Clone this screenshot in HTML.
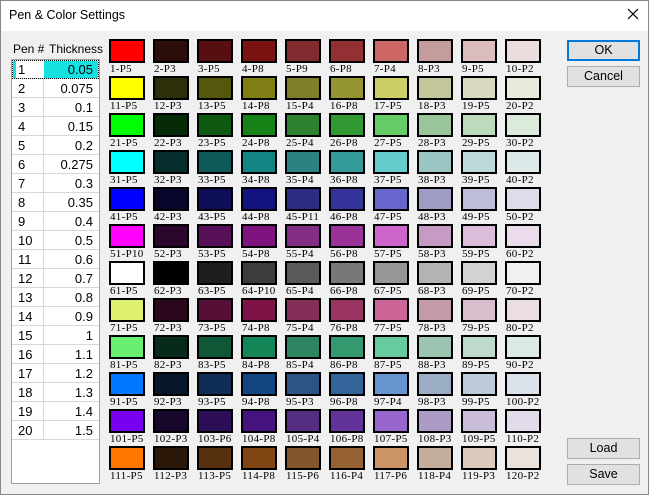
<!DOCTYPE html>
<html><head><meta charset="utf-8"><style>
*{margin:0;padding:0;box-sizing:border-box}
body{width:649px;height:495px;overflow:hidden;background:#fff;font-family:"Liberation Sans",sans-serif}
#win{position:absolute;left:0;top:0;width:649px;height:495px;background:#f0f0f0;border:1px solid #888}
#title{position:absolute;left:0;top:0;width:647px;height:30px;background:#fff}
#title span{position:absolute;left:8px;top:7px;font-size:12.5px;color:#000}
#x{position:absolute;left:625px;top:6px;width:14px;height:14px}
.hdr{position:absolute;top:41px;font-size:12px;color:#000}
#tbl{position:absolute;left:10px;top:58px;width:89px;height:425px;background:#fff;border:1px solid #a0a0a0}
.r{position:absolute;left:0;width:87px;height:19px;border-bottom:1px solid #d8d8d8;font-size:13px}
.r .a{position:absolute;left:6px;top:2px}
.r .b{position:absolute;right:6px;top:2px}
.r .v{position:absolute;left:31px;top:0;width:1px;height:19px;background:#d8d8d8}
.s{position:absolute;width:36px;height:24px;border:2px solid #000}
.l{position:absolute;font-family:"Liberation Serif",serif;font-size:11px;color:#000;letter-spacing:0.3px;white-space:nowrap;margin-top:1px}
.btn{position:absolute;left:566px;width:73px;height:21px;background:#e1e1e1;border:1px solid #adadad;font-size:12.5px;text-align:center;line-height:19px}
</style></head><body><div id="win">
<div id="title"><span>Pen &amp; Color Settings</span>
<svg id="x" viewBox="0 0 14 14"><path d="M2 2L12 12M12 2L2 12" stroke="#000" stroke-width="1.2"/></svg></div>
<div class="hdr" style="left:12px">Pen #</div><div class="hdr" style="left:48px">Thickness</div>
<div id="tbl">
<div class="r" style="top:0"><div style="position:absolute;left:1px;top:1px;width:3px;height:17px;background:#17e0e0"></div><div style="position:absolute;left:32px;top:1px;width:54px;height:17px;background:#17e0e0"></div><div style="position:absolute;left:0;top:0;width:87px;height:19px;border:1px dotted #000"></div><span class="a">1</span><span class="b">0.05</span></div>
<div class="r" style="top:19px"><span class="a">2</span><i class="v"></i><span class="b">0.075</span></div>
<div class="r" style="top:38px"><span class="a">3</span><i class="v"></i><span class="b">0.1</span></div>
<div class="r" style="top:57px"><span class="a">4</span><i class="v"></i><span class="b">0.15</span></div>
<div class="r" style="top:76px"><span class="a">5</span><i class="v"></i><span class="b">0.2</span></div>
<div class="r" style="top:95px"><span class="a">6</span><i class="v"></i><span class="b">0.275</span></div>
<div class="r" style="top:114px"><span class="a">7</span><i class="v"></i><span class="b">0.3</span></div>
<div class="r" style="top:133px"><span class="a">8</span><i class="v"></i><span class="b">0.35</span></div>
<div class="r" style="top:152px"><span class="a">9</span><i class="v"></i><span class="b">0.4</span></div>
<div class="r" style="top:171px"><span class="a">10</span><i class="v"></i><span class="b">0.5</span></div>
<div class="r" style="top:190px"><span class="a">11</span><i class="v"></i><span class="b">0.6</span></div>
<div class="r" style="top:209px"><span class="a">12</span><i class="v"></i><span class="b">0.7</span></div>
<div class="r" style="top:228px"><span class="a">13</span><i class="v"></i><span class="b">0.8</span></div>
<div class="r" style="top:247px"><span class="a">14</span><i class="v"></i><span class="b">0.9</span></div>
<div class="r" style="top:266px"><span class="a">15</span><i class="v"></i><span class="b">1</span></div>
<div class="r" style="top:285px"><span class="a">16</span><i class="v"></i><span class="b">1.1</span></div>
<div class="r" style="top:304px"><span class="a">17</span><i class="v"></i><span class="b">1.2</span></div>
<div class="r" style="top:323px"><span class="a">18</span><i class="v"></i><span class="b">1.3</span></div>
<div class="r" style="top:342px"><span class="a">19</span><i class="v"></i><span class="b">1.4</span></div>
<div class="r" style="top:361px"><span class="a">20</span><i class="v"></i><span class="b">1.5</span></div>
</div>

<div class="s" style="left:108px;top:38px;background:#ff0000"></div><div class="l" style="left:109px;top:61px">1-P5</div>
<div class="s" style="left:152px;top:38px;background:#2b0d09"></div><div class="l" style="left:153px;top:61px">2-P3</div>
<div class="s" style="left:196px;top:38px;background:#570f12"></div><div class="l" style="left:197px;top:61px">3-P5</div>
<div class="s" style="left:240px;top:38px;background:#7b1313"></div><div class="l" style="left:241px;top:61px">4-P8</div>
<div class="s" style="left:284px;top:38px;background:#812b2e"></div><div class="l" style="left:285px;top:61px">5-P9</div>
<div class="s" style="left:328px;top:38px;background:#923034"></div><div class="l" style="left:329px;top:61px">6-P8</div>
<div class="s" style="left:372px;top:38px;background:#cd6766"></div><div class="l" style="left:373px;top:61px">7-P4</div>
<div class="s" style="left:416px;top:38px;background:#c49c9c"></div><div class="l" style="left:417px;top:61px">8-P3</div>
<div class="s" style="left:460px;top:38px;background:#dbbdbe"></div><div class="l" style="left:461px;top:61px">9-P5</div>
<div class="s" style="left:504px;top:38px;background:#ebdddd"></div><div class="l" style="left:505px;top:61px">10-P2</div>

<div class="s" style="left:108px;top:75px;background:#ffff00"></div><div class="l" style="left:109px;top:98px">11-P5</div>
<div class="s" style="left:152px;top:75px;background:#2e2e0a"></div><div class="l" style="left:153px;top:98px">12-P3</div>
<div class="s" style="left:196px;top:75px;background:#55570f"></div><div class="l" style="left:197px;top:98px">13-P5</div>
<div class="s" style="left:240px;top:75px;background:#7f7f16"></div><div class="l" style="left:241px;top:98px">14-P8</div>
<div class="s" style="left:284px;top:75px;background:#7f7f2b"></div><div class="l" style="left:285px;top:98px">15-P4</div>
<div class="s" style="left:328px;top:75px;background:#959631"></div><div class="l" style="left:329px;top:98px">16-P8</div>
<div class="s" style="left:372px;top:75px;background:#cece66"></div><div class="l" style="left:373px;top:98px">17-P5</div>
<div class="s" style="left:416px;top:75px;background:#c4c59b"></div><div class="l" style="left:417px;top:98px">18-P3</div>
<div class="s" style="left:460px;top:75px;background:#d8d9be"></div><div class="l" style="left:461px;top:98px">19-P5</div>
<div class="s" style="left:504px;top:75px;background:#e8eadc"></div><div class="l" style="left:505px;top:98px">20-P2</div>

<div class="s" style="left:108px;top:112px;background:#00ff00"></div><div class="l" style="left:109px;top:135px">21-P5</div>
<div class="s" style="left:152px;top:112px;background:#072b07"></div><div class="l" style="left:153px;top:135px">22-P3</div>
<div class="s" style="left:196px;top:112px;background:#0e5811"></div><div class="l" style="left:197px;top:135px">23-P5</div>
<div class="s" style="left:240px;top:112px;background:#178218"></div><div class="l" style="left:241px;top:135px">24-P8</div>
<div class="s" style="left:284px;top:112px;background:#2c822e"></div><div class="l" style="left:285px;top:135px">25-P4</div>
<div class="s" style="left:328px;top:112px;background:#339933"></div><div class="l" style="left:329px;top:135px">26-P8</div>
<div class="s" style="left:372px;top:112px;background:#66cc66"></div><div class="l" style="left:373px;top:135px">27-P5</div>
<div class="s" style="left:416px;top:112px;background:#9bc59b"></div><div class="l" style="left:417px;top:135px">28-P3</div>
<div class="s" style="left:460px;top:112px;background:#bcdabc"></div><div class="l" style="left:461px;top:135px">29-P5</div>
<div class="s" style="left:504px;top:112px;background:#dceadc"></div><div class="l" style="left:505px;top:135px">30-P2</div>

<div class="s" style="left:108px;top:149px;background:#00ffff"></div><div class="l" style="left:109px;top:172px">31-P5</div>
<div class="s" style="left:152px;top:149px;background:#062d2d"></div><div class="l" style="left:153px;top:172px">32-P3</div>
<div class="s" style="left:196px;top:149px;background:#0e5a5a"></div><div class="l" style="left:197px;top:172px">33-P5</div>
<div class="s" style="left:240px;top:149px;background:#148383"></div><div class="l" style="left:241px;top:172px">34-P8</div>
<div class="s" style="left:284px;top:149px;background:#2c8282"></div><div class="l" style="left:285px;top:172px">35-P4</div>
<div class="s" style="left:328px;top:149px;background:#339999"></div><div class="l" style="left:329px;top:172px">36-P8</div>
<div class="s" style="left:372px;top:149px;background:#66cccc"></div><div class="l" style="left:373px;top:172px">37-P5</div>
<div class="s" style="left:416px;top:149px;background:#9bc5c5"></div><div class="l" style="left:417px;top:172px">38-P3</div>
<div class="s" style="left:460px;top:149px;background:#bcdada"></div><div class="l" style="left:461px;top:172px">39-P5</div>
<div class="s" style="left:504px;top:149px;background:#dceaea"></div><div class="l" style="left:505px;top:172px">40-P2</div>

<div class="s" style="left:108px;top:186px;background:#0000ff"></div><div class="l" style="left:109px;top:209px">41-P5</div>
<div class="s" style="left:152px;top:186px;background:#07072b"></div><div class="l" style="left:153px;top:209px">42-P3</div>
<div class="s" style="left:196px;top:186px;background:#0f0f57"></div><div class="l" style="left:197px;top:209px">43-P5</div>
<div class="s" style="left:240px;top:186px;background:#13137f"></div><div class="l" style="left:241px;top:209px">44-P8</div>
<div class="s" style="left:284px;top:186px;background:#2d2d82"></div><div class="l" style="left:285px;top:209px">45-P11</div>
<div class="s" style="left:328px;top:186px;background:#333399"></div><div class="l" style="left:329px;top:209px">46-P8</div>
<div class="s" style="left:372px;top:186px;background:#6666cc"></div><div class="l" style="left:373px;top:209px">47-P5</div>
<div class="s" style="left:416px;top:186px;background:#9c9cc5"></div><div class="l" style="left:417px;top:209px">48-P3</div>
<div class="s" style="left:460px;top:186px;background:#bdbdda"></div><div class="l" style="left:461px;top:209px">49-P5</div>
<div class="s" style="left:504px;top:186px;background:#dcdcea"></div><div class="l" style="left:505px;top:209px">50-P2</div>

<div class="s" style="left:108px;top:223px;background:#ff00ff"></div><div class="l" style="left:109px;top:246px">51-P10</div>
<div class="s" style="left:152px;top:223px;background:#2b072b"></div><div class="l" style="left:153px;top:246px">52-P3</div>
<div class="s" style="left:196px;top:223px;background:#570f57"></div><div class="l" style="left:197px;top:246px">53-P5</div>
<div class="s" style="left:240px;top:223px;background:#7f137f"></div><div class="l" style="left:241px;top:246px">54-P8</div>
<div class="s" style="left:284px;top:223px;background:#832d83"></div><div class="l" style="left:285px;top:246px">55-P4</div>
<div class="s" style="left:328px;top:223px;background:#993399"></div><div class="l" style="left:329px;top:246px">56-P8</div>
<div class="s" style="left:372px;top:223px;background:#cc66cc"></div><div class="l" style="left:373px;top:246px">57-P5</div>
<div class="s" style="left:416px;top:223px;background:#c59bc5"></div><div class="l" style="left:417px;top:246px">58-P3</div>
<div class="s" style="left:460px;top:223px;background:#dabdda"></div><div class="l" style="left:461px;top:246px">59-P5</div>
<div class="s" style="left:504px;top:223px;background:#eadcea"></div><div class="l" style="left:505px;top:246px">60-P2</div>

<div class="s" style="left:108px;top:260px;background:#ffffff"></div><div class="l" style="left:109px;top:283px">61-P5</div>
<div class="s" style="left:152px;top:260px;background:#000000"></div><div class="l" style="left:153px;top:283px">62-P3</div>
<div class="s" style="left:196px;top:260px;background:#1e1e1e"></div><div class="l" style="left:197px;top:283px">63-P5</div>
<div class="s" style="left:240px;top:260px;background:#3c3c3c"></div><div class="l" style="left:241px;top:283px">64-P10</div>
<div class="s" style="left:284px;top:260px;background:#5a5a5a"></div><div class="l" style="left:285px;top:283px">65-P4</div>
<div class="s" style="left:328px;top:260px;background:#787878"></div><div class="l" style="left:329px;top:283px">66-P8</div>
<div class="s" style="left:372px;top:260px;background:#969696"></div><div class="l" style="left:373px;top:283px">67-P5</div>
<div class="s" style="left:416px;top:260px;background:#b4b4b4"></div><div class="l" style="left:417px;top:283px">68-P3</div>
<div class="s" style="left:460px;top:260px;background:#d2d2d2"></div><div class="l" style="left:461px;top:283px">69-P5</div>
<div class="s" style="left:504px;top:260px;background:#f0f0f0"></div><div class="l" style="left:505px;top:283px">70-P2</div>

<div class="s" style="left:108px;top:297px;background:#dfef70"></div><div class="l" style="left:109px;top:320px">71-P5</div>
<div class="s" style="left:152px;top:297px;background:#2b071b"></div><div class="l" style="left:153px;top:320px">72-P3</div>
<div class="s" style="left:196px;top:297px;background:#570f37"></div><div class="l" style="left:197px;top:320px">73-P5</div>
<div class="s" style="left:240px;top:297px;background:#7f1347"></div><div class="l" style="left:241px;top:320px">74-P8</div>
<div class="s" style="left:284px;top:297px;background:#832d57"></div><div class="l" style="left:285px;top:320px">75-P4</div>
<div class="s" style="left:328px;top:297px;background:#99335f"></div><div class="l" style="left:329px;top:320px">76-P8</div>
<div class="s" style="left:372px;top:297px;background:#cc6699"></div><div class="l" style="left:373px;top:320px">77-P5</div>
<div class="s" style="left:416px;top:297px;background:#c59bac"></div><div class="l" style="left:417px;top:320px">78-P3</div>
<div class="s" style="left:460px;top:297px;background:#dabdcc"></div><div class="l" style="left:461px;top:320px">79-P5</div>
<div class="s" style="left:504px;top:297px;background:#eadde3"></div><div class="l" style="left:505px;top:320px">80-P2</div>

<div class="s" style="left:108px;top:334px;background:#6bef70"></div><div class="l" style="left:109px;top:357px">81-P5</div>
<div class="s" style="left:152px;top:334px;background:#072b1b"></div><div class="l" style="left:153px;top:357px">82-P3</div>
<div class="s" style="left:196px;top:334px;background:#0f5837"></div><div class="l" style="left:197px;top:357px">83-P5</div>
<div class="s" style="left:240px;top:334px;background:#138556"></div><div class="l" style="left:241px;top:357px">84-P8</div>
<div class="s" style="left:284px;top:334px;background:#2d8562"></div><div class="l" style="left:285px;top:357px">85-P4</div>
<div class="s" style="left:328px;top:334px;background:#33996f"></div><div class="l" style="left:329px;top:357px">86-P8</div>
<div class="s" style="left:372px;top:334px;background:#66cc9f"></div><div class="l" style="left:373px;top:357px">87-P5</div>
<div class="s" style="left:416px;top:334px;background:#9bc5b0"></div><div class="l" style="left:417px;top:357px">88-P3</div>
<div class="s" style="left:460px;top:334px;background:#bddacc"></div><div class="l" style="left:461px;top:357px">89-P5</div>
<div class="s" style="left:504px;top:334px;background:#dceae4"></div><div class="l" style="left:505px;top:357px">90-P2</div>

<div class="s" style="left:108px;top:371px;background:#0077ff"></div><div class="l" style="left:109px;top:394px">91-P5</div>
<div class="s" style="left:152px;top:371px;background:#07172b"></div><div class="l" style="left:153px;top:394px">92-P3</div>
<div class="s" style="left:196px;top:371px;background:#0f2c57"></div><div class="l" style="left:197px;top:394px">93-P5</div>
<div class="s" style="left:240px;top:371px;background:#134680"></div><div class="l" style="left:241px;top:394px">94-P8</div>
<div class="s" style="left:284px;top:371px;background:#2d5485"></div><div class="l" style="left:285px;top:394px">95-P3</div>
<div class="s" style="left:328px;top:371px;background:#336499"></div><div class="l" style="left:329px;top:394px">96-P8</div>
<div class="s" style="left:372px;top:371px;background:#6694cc"></div><div class="l" style="left:373px;top:394px">97-P4</div>
<div class="s" style="left:416px;top:371px;background:#9bacc5"></div><div class="l" style="left:417px;top:394px">98-P3</div>
<div class="s" style="left:460px;top:371px;background:#bdcada"></div><div class="l" style="left:461px;top:394px">99-P5</div>
<div class="s" style="left:504px;top:371px;background:#dce2ea"></div><div class="l" style="left:505px;top:394px">100-P2</div>

<div class="s" style="left:108px;top:408px;background:#7700ef"></div><div class="l" style="left:109px;top:431px">101-P5</div>
<div class="s" style="left:152px;top:408px;background:#17072b"></div><div class="l" style="left:153px;top:431px">102-P3</div>
<div class="s" style="left:196px;top:408px;background:#2d0f57"></div><div class="l" style="left:197px;top:431px">103-P6</div>
<div class="s" style="left:240px;top:408px;background:#47137f"></div><div class="l" style="left:241px;top:431px">104-P8</div>
<div class="s" style="left:284px;top:408px;background:#552d83"></div><div class="l" style="left:285px;top:431px">105-P4</div>
<div class="s" style="left:328px;top:408px;background:#623399"></div><div class="l" style="left:329px;top:431px">106-P8</div>
<div class="s" style="left:372px;top:408px;background:#9966cc"></div><div class="l" style="left:373px;top:431px">107-P5</div>
<div class="s" style="left:416px;top:408px;background:#ac9bc5"></div><div class="l" style="left:417px;top:431px">108-P3</div>
<div class="s" style="left:460px;top:408px;background:#cabdda"></div><div class="l" style="left:461px;top:431px">109-P5</div>
<div class="s" style="left:504px;top:408px;background:#e2dcea"></div><div class="l" style="left:505px;top:431px">110-P2</div>

<div class="s" style="left:108px;top:445px;background:#ff7700"></div><div class="l" style="left:109px;top:468px">111-P5</div>
<div class="s" style="left:152px;top:445px;background:#2b1707"></div><div class="l" style="left:153px;top:468px">112-P3</div>
<div class="s" style="left:196px;top:445px;background:#57300f"></div><div class="l" style="left:197px;top:468px">113-P5</div>
<div class="s" style="left:240px;top:445px;background:#804513"></div><div class="l" style="left:241px;top:468px">114-P8</div>
<div class="s" style="left:284px;top:445px;background:#83572d"></div><div class="l" style="left:285px;top:468px">115-P6</div>
<div class="s" style="left:328px;top:445px;background:#966233"></div><div class="l" style="left:329px;top:468px">116-P4</div>
<div class="s" style="left:372px;top:445px;background:#cc9566"></div><div class="l" style="left:373px;top:468px">117-P6</div>
<div class="s" style="left:416px;top:445px;background:#c5ad9b"></div><div class="l" style="left:417px;top:468px">118-P4</div>
<div class="s" style="left:460px;top:445px;background:#dac9bc"></div><div class="l" style="left:461px;top:468px">119-P3</div>
<div class="s" style="left:504px;top:445px;background:#eae2dc"></div><div class="l" style="left:505px;top:468px">120-P2</div>

<div class="btn" style="top:39px;border:2px solid #0078d7;line-height:17px">OK</div>
<div class="btn" style="top:65px">Cancel</div>
<div class="btn" style="top:437px">Load</div>
<div class="btn" style="top:463px">Save</div>
</div></body></html>
